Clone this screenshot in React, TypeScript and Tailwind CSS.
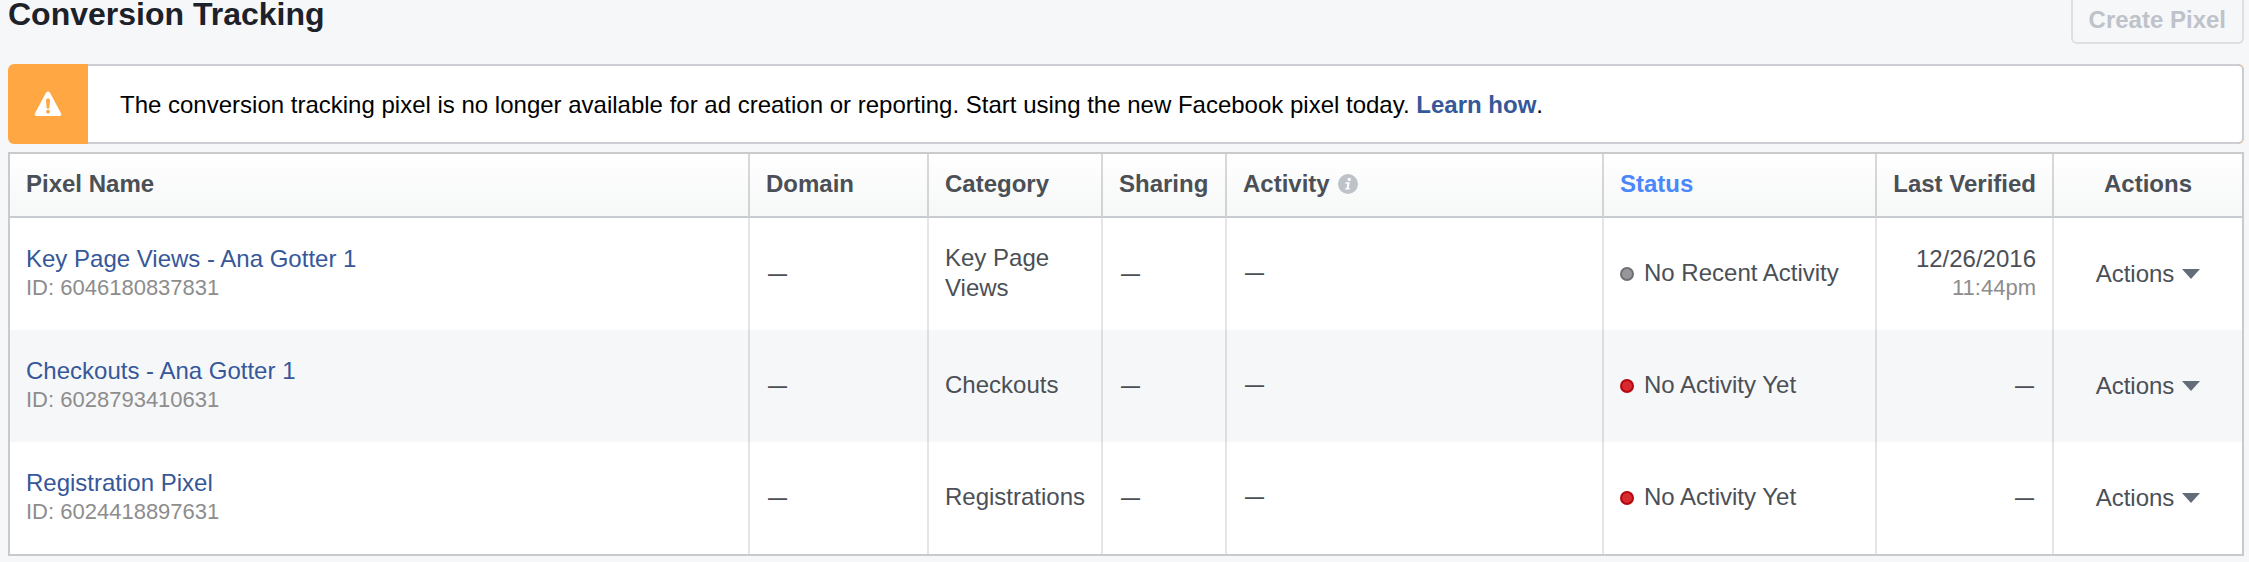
import type { ReactNode } from 'react'

type Pixel = {
  id: string
  name: string
  category: string
  active: 'stale' | 'never'
  status: string
  date?: string
  time?: string
}

const pixels: Pixel[] = [
  {
    id: '6046180837831',
    name: 'Key Page Views - Ana Gotter 1',
    category: 'Key Page Views',
    active: 'stale',
    status: 'No Recent Activity',
    date: '12/26/2016',
    time: '11:44pm',
  },
  { id: '6028793410631', name: 'Checkouts - Ana Gotter 1', category: 'Checkouts', active: 'never', status: 'No Activity Yet' },
  { id: '6024418897631', name: 'Registration Pixel', category: 'Registrations', active: 'never', status: 'No Activity Yet' },
]

function WarningIcon() {
  return (
    <svg width="28" height="26" viewBox="0 0 28 26" aria-hidden="true">
      <path
        d="M12.1 1.6c.8-1.4 3-1.4 3.8 0l11.2 20.9c.7 1.3-.1 2.5-1.5 2.5H2.4C1 25 .2 23.800.9 22.500z"
        fill="#fff"
      />
      <path d="M12 9.500c0-2.600 4-2.600 4 0l-.6 7.200c-.2 1.500-2.600 1.500-2.800 0z" fill="#ffa843" />
      <circle cx="14" cy="20.700" r="1.900" fill="#ffa843" />
    </svg>
  )
}

function InfoIcon() {
  return (
    <svg width="20" height="20" viewBox="0 0 20 20" aria-hidden="true">
      <circle cx="10" cy="10" r="10" fill="#bec2c9" />
      <circle cx="11.200" cy="5.400" r="1.700" fill="#fff" />
      <path d="M7.500 8.300h4.300l-1.200 5.800h1.200l-.3 1.500H7.200l.3-1.500h1l.9-4.300H7.200z" fill="#fff" />
    </svg>
  )
}

function Dash() {
  return <span className="px-[2px] text-[19px] font-bold">—</span>
}

function Th({ children, className = '' }: { children: ReactNode; className?: string }) {
  return (
    <th
      scope="col"
      className={`h-16 border-r-2 border-b-2 border-r-black/15 border-b-[#c8ccd0] bg-linear-to-b from-white to-[#f6f7f7] px-4 pb-[2px] font-bold whitespace-nowrap last:border-r-0 ${className}`}
    >
      {children}
    </th>
  )
}

function Td({ children, className = 'pb-[2px]' }: { children: ReactNode; className?: string }) {
  return <td className={`h-28 border-r-2 border-black/10 px-4 last:border-r-0 ${className}`}>{children}</td>
}

function PixelRow({ pixel }: { pixel: Pixel }) {
  return (
    <tr className="bg-white even:bg-[#f6f7f9]">
      <Td>
        <a href="#" className="block text-[#365899]">{pixel.name}</a>
        <div className="text-[22px] leading-7 text-[#8d8d8d]">ID: {pixel.id}</div>
      </Td>
      <Td><Dash /></Td>
      <Td>{pixel.category}</Td>
      <Td><Dash /></Td>
      <Td className="pb-1"><Dash /></Td>
      <Td>
        <div className="flex items-center gap-2.5 whitespace-nowrap">
          <span
            className={`mt-[2px] size-3.5 rounded-full border-2 ${
              pixel.active === 'stale' ? 'border-[#6f7074] bg-[#97979b]' : 'border-[#b3060e] bg-[#d8292f]'
            }`}
          />
          {pixel.status}
        </div>
      </Td>
      <Td className="pb-[2px] text-right">
        {pixel.date ? (
          <>
            <div>{pixel.date}</div>
            <div className="text-[22px] leading-7 text-[#8d8d8d]">{pixel.time}</div>
          </>
        ) : (
          <Dash />
        )}
      </Td>
      <Td className="text-center">
        <button type="button" className="inline-flex items-center gap-2">
          Actions
          <svg width="18" height="10" viewBox="0 0 18 10" aria-hidden="true">
            <path d="M0 0h18L9 10z" fill="#646b79" />
          </svg>
        </button>
      </Td>
    </tr>
  )
}

export default function App() {
  return (
    <div className="min-h-screen bg-[#f6f7f9] pr-[5px] pb-1.5 pl-2 font-['Liberation_Sans',Arial,sans-serif] text-[24px] leading-[30px] text-[#4b4f56]">
      <header className="flex items-start justify-between pb-5">
        <h1 className="text-[32px] leading-7 font-bold text-[#1d2129]">Conversion Tracking</h1>
        <button
          type="button"
          disabled
          className="rounded-b-md border-2 border-t-0 border-[#dddfe2] px-4 pt-[5px] pb-[7px] font-bold text-[#bec2c9]"
        >
          Create Pixel
        </button>
      </header>

      <div role="alert" className="flex h-20 overflow-hidden rounded-md bg-[#ffa843]">
        <div className="flex w-20 shrink-0 items-center justify-center">
          <WarningIcon />
        </div>
        <p className="flex-1 rounded-r-md border-2 border-l-0 border-[#ccced3] bg-white px-8 pt-6 text-black">
          The conversion tracking pixel is no longer available for ad creation or reporting. Start using the new Facebook pixel today.{' '}
          <a href="#" className="font-bold text-[#365899]">Learn how</a>.
        </p>
      </div>

      <div className="mt-2 border-2 border-[#c9cacc]">
        <table className="w-full table-fixed border-separate border-spacing-0 text-left">
          <colgroup>
            <col />
            <col className="w-[179px]" />
            <col className="w-[174px]" />
            <col className="w-[124px]" />
            <col className="w-[377px]" />
            <col className="w-[273px]" />
            <col className="w-[177px]" />
            <col className="w-[188px]" />
          </colgroup>
          <thead>
            <tr>
              <Th>Pixel Name</Th>
              <Th>Domain</Th>
              <Th>Category</Th>
              <Th>Sharing</Th>
              <Th>
                <span className="flex items-center gap-2">
                  Activity <InfoIcon />
                </span>
              </Th>
              <Th className="text-[#4b86fb]">Status</Th>
              <Th className="text-right">Last Verified</Th>
              <Th className="text-center">Actions</Th>
            </tr>
          </thead>
          <tbody>
            {pixels.map(pixel => (
              <PixelRow key={pixel.id} pixel={pixel} />
            ))}
          </tbody>
        </table>
      </div>
    </div>
  )
}
